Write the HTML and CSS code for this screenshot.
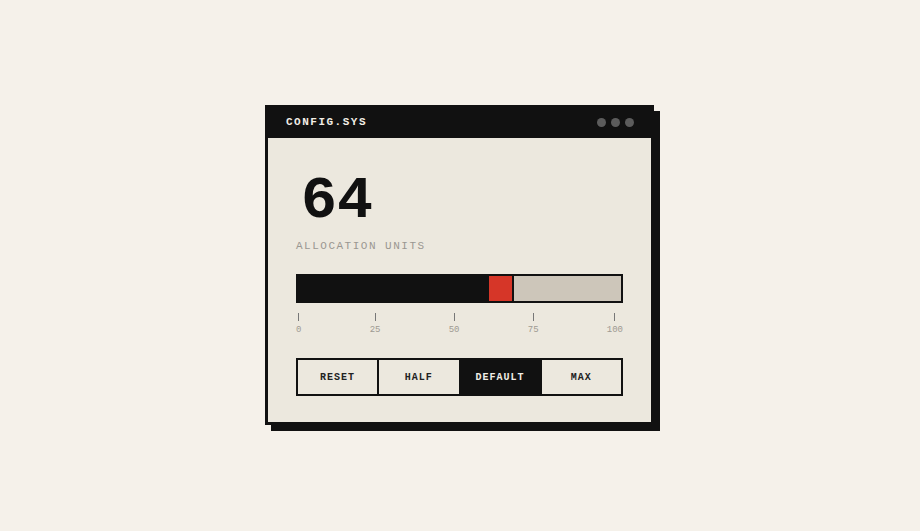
FILE: index.html
```html
<!DOCTYPE html>
<html>
<head>
<meta charset="utf-8">
<link rel="stylesheet" href="styles.css">
</head>
<body>
<div class="stage">
  <div class="window">
    <div class="titlebar">
      <span class="title">CONFIG.SYS</span>
      <span class="dots"><i></i><i></i><i></i></span>
    </div>
    <div class="content">
      <div class="value">64</div>
      <div class="label">ALLOCATION UNITS</div>
      <div class="bar">
        <div class="fill"></div>
        <div class="thumb"></div>
        <div class="rest"></div>
      </div>
      <div class="scale">
        <div class="tick"><span class="mark"></span><span>0</span></div>
        <div class="tick"><span class="mark"></span><span>25</span></div>
        <div class="tick"><span class="mark"></span><span>50</span></div>
        <div class="tick"><span class="mark"></span><span>75</span></div>
        <div class="tick"><span class="mark"></span><span>100</span></div>
      </div>
      <div class="buttons">
        <button class="btn">RESET</button>
        <button class="btn">HALF</button>
        <button class="btn active">DEFAULT</button>
        <button class="btn">MAX</button>
      </div>
    </div>
  </div>
</div>
</body>
</html>
```
FILE: styles.css
```css
* { box-sizing: border-box; }
html, body { margin: 0; padding: 0; }
body {
  background: #f5f1ea;
  width: 920px;
  height: 531px;
  font-family: "Liberation Mono", "Courier New", monospace;
  overflow: hidden;
}
.stage {
  padding-top: 105px;
  padding-left: 265px;
}
.window {
  width: 389px;
  border: 3px solid #111;
  background: #ece8de;
  box-shadow: 6px 6px 0 #111;
  display: flex;
  flex-direction: column;
}
.titlebar {
  flex-shrink: 0;
  background: #111;
  display: flex;
  align-items: center;
  justify-content: space-between;
  margin: -3px -3px 0 -3px;
  height: 33px;
  padding: 1px 20px 0 21px;
}
.title {
  color: #f2eee6;
  font-weight: bold;
  font-size: 11px;
  letter-spacing: 1.5px;
}
.dots { display: flex; gap: 5px; }
.dots i {
  display: block;
  width: 9px;
  height: 9px;
  border-radius: 50%;
  background: #5c5c5c;
}
.content {
  padding: 28px 28px 26px 28px;
  display: flex;
  flex-direction: column;
}
.value {
  margin-top: 5px;
  font-size: 60px;
  line-height: 60px;
  height: 60px;
  font-weight: bold;
  color: #111;
  padding-left: 5px;
}
.label {
  margin-top: 8px;
  font-size: 11px;
  line-height: 14px;
  letter-spacing: 1.5px;
  color: #9a9791;
}
.bar {
  margin-top: 21px;
  height: 29px;
  border: 2px solid #111;
  display: flex;
  background: #cdc6ba;
}
.fill { width: 191px; background: #111; }
.thumb { width: 23px; background: #d63628; }
.rest { flex: 1; border-left: 2px solid #111; }
.scale {
  margin-top: 10px;
  display: flex;
  justify-content: space-between;
}
.tick {
  display: flex;
  flex-direction: column;
  align-items: center;
  font-size: 9px;
  line-height: 12px;
  color: #9e9a92;
}
.mark {
  width: 1px;
  height: 8px;
  background: #777;
  margin-bottom: 3px;
}
.buttons {
  margin-top: 22px;
  display: flex;
  border: 2px solid #111;
  height: 38px;
}
.btn {
  flex: 1;
  background: #ece8de;
  border: none;
  border-left: 2px solid #111;
  font-family: "Liberation Mono", "Courier New", monospace;
  font-weight: bold;
  font-size: 10px;
  letter-spacing: 1px;
  color: #222;
  padding: 0;
}
.btn:first-child { border-left: none; }
.btn.active { background: #111; color: #f2eee6; }
```
